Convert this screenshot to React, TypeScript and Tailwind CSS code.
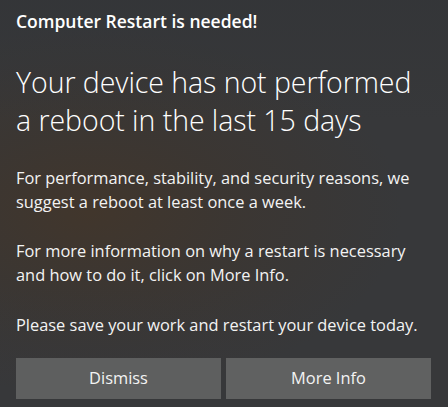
import React from "react";

export default function App() {
  return (
    <div
      className="relative w-[448px] h-[407px] overflow-hidden text-white bg-[#37383a]"
      style={{ fontFamily: '"Open Sans", "Noto Sans", sans-serif' }}
    >
      <div className="absolute inset-0 bg-[radial-gradient(ellipse_70%_45%_at_20%_52%,#41362c_0%,rgba(62,53,45,0.6)_45%,rgba(55,56,58,0)_100%)]" />
      <div className="absolute inset-0 bg-[linear-gradient(180deg,rgba(50,52,55,0.6)_0%,rgba(50,52,55,0)_30%,rgba(50,52,55,0)_70%,rgba(55,56,58,0.5)_100%)]" />
      <div className="relative flex flex-col pl-[16px] pr-[17px] pt-[11px]">
        <div className="text-[17.5px] leading-[20px] font-semibold">
          Computer Restart is needed!
        </div>
        <div className="mt-[32px] text-[28.5px] leading-[38px] font-[350] tracking-[-0.05px] whitespace-nowrap">
          Your device has not performed
          <br />
          a reboot in the last 15 days
        </div>
        <p className="mt-[27px] text-[16.4px] leading-[23.5px] text-[#f3f3f3]">
          For performance, stability, and security reasons, we suggest a reboot at least once a week.
        </p>
        <p className="mt-[26px] text-[16.4px] leading-[23.5px] text-[#f3f3f3]">
          For more information on why a restart is necessary and how to do it, click on More Info.
        </p>
        <p className="mt-[27px] text-[16.4px] leading-[23.5px] text-[#f3f3f3]">
          Please save your work and restart your device today.
        </p>
        <div className="mt-[21px] grid grid-cols-2 gap-[5px]">
          <button className="h-[41px] bg-[#5e5f5f] text-[16.4px] text-[#f3f3f3]">
            Dismiss
          </button>
          <button className="h-[41px] bg-[#606161] text-[16.4px] text-[#f3f3f3]">
            More Info
          </button>
        </div>
      </div>
    </div>
  );
}
